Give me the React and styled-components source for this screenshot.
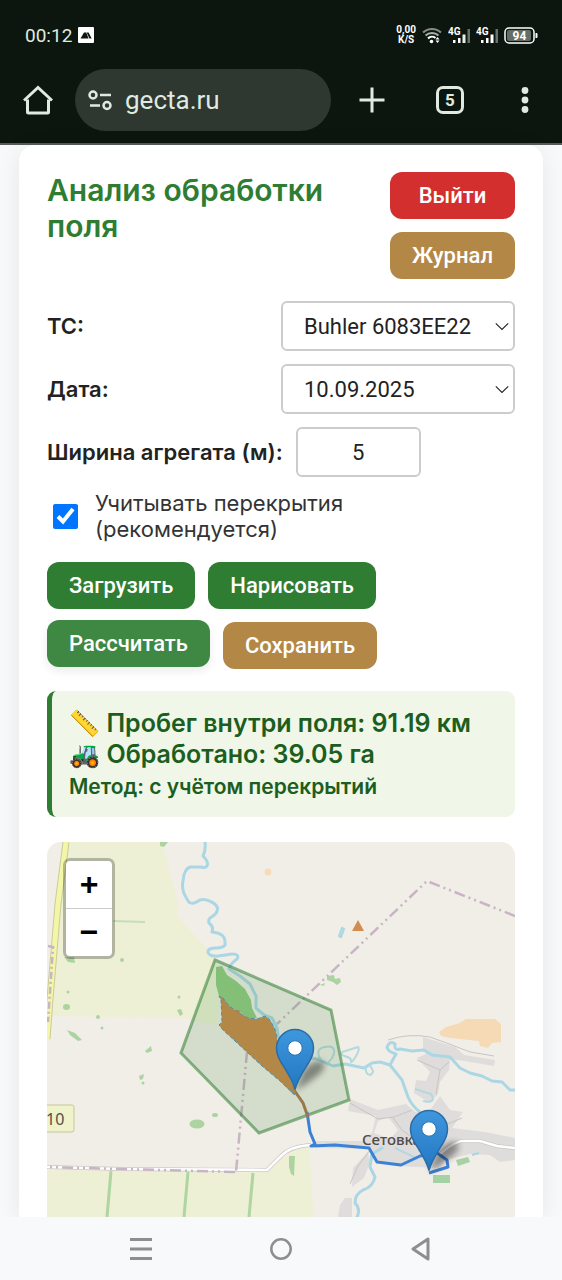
import styled, { createGlobalStyle } from 'styled-components'

const colors = {
  chrome: '#0c160e',
  pill: '#2e3730',
  chromeIcon: '#dfebe0',
  page: '#f7f9fb',
  green: '#2e7d32',
  greenHover: '#3e8843',
  darkGreen: '#1b5e20',
  red: '#d32f2f',
  brown: '#b38847',
  text: '#222222',
  border: '#cccccc',
}

const fonts = {
  inter: "Inter, 'Noto Color Emoji', sans-serif",
  roboto: 'Roboto, sans-serif',
}

const GlobalStyle = createGlobalStyle`
  * {
    box-sizing: border-box;
  }

  body {
    margin: 0;
    background: ${colors.page};
    color: ${colors.text};
    font-family: ${fonts.inter};
  }

  button {
    border: 0;
    padding: 0;
    background: none;
    cursor: pointer;
  }

  svg {
    display: block;
  }
`

const Screen = styled.div`
  display: flex;
  flex-direction: column;
  min-height: 100vh;
`

const Chrome = styled.header`
  background: ${colors.chrome};
  border-bottom: 2px solid #565c57;
  color: ${colors.chromeIcon};
  font-family: ${fonts.roboto};
`

const StatusBar = styled.div`
  display: flex;
  align-items: center;
  justify-content: space-between;
  height: 69px;
  padding: 1px 24px 0 25px;
`

const StatusGroup = styled.div`
  display: flex;
  align-items: center;
  gap: 6px;
`

const Clock = styled.span`
  font-size: 19px;
`

const Speed = styled.span`
  color: #fff;
  font-size: 10px;
  font-weight: 700;
  line-height: 10px;
  text-align: center;
`

const AddressBar = styled.div`
  display: grid;
  grid-template-columns: 75px 1fr 81px 76px 74px;
  align-items: center;
  height: 74px;
  padding-bottom: 12px;
`

const ChromeButton = styled.button`
  display: flex;
  align-items: center;
  justify-content: center;
  height: 62px;
  color: inherit;
`

const Pill = styled.div`
  display: flex;
  align-items: center;
  gap: 12px;
  height: 62px;
  padding-left: 13px;
  border-radius: 31px;
  background: ${colors.pill};
`

const Address = styled.span`
  font-size: 26px;
`

const TabCount = styled.span`
  display: flex;
  align-items: center;
  justify-content: center;
  width: 28px;
  height: 28px;
  border: 3px solid currentColor;
  border-radius: 7px;
  font-family: ${fonts.roboto};
  font-size: 17px;
  font-weight: 700;
`

const Card = styled.main`
  flex: 1;
  margin: 0 19px;
  padding: 27px 28px 0;
  border-radius: 16px 16px 0 0;
  background: #fff;
  box-shadow: 0 4px 24px rgba(0, 0, 0, 0.08);
`

const CardHeader = styled.div`
  display: flex;
  align-items: flex-start;
  justify-content: space-between;
  gap: 24px;
  margin-bottom: 22px;
`

const Title = styled.h1`
  margin: 0;
  color: ${colors.green};
  font-size: 30px;
  font-weight: 600;
  line-height: 36px;
`

const HeaderButtons = styled.div`
  display: flex;
  flex-direction: column;
  flex: none;
  gap: 13px;
`

const Button = styled.button`
  height: 47px;
  padding: 0 22px;
  border-radius: 12px;
  background: ${({ $color }) => $color};
  color: #fff;
  font-family: ${fonts.roboto};
  font-size: 22px;
  font-weight: 500;
`

const RaisedButton = styled(Button)`
  transform: translateY(-2px);
  box-shadow: 0 4px 10px rgba(0, 0, 0, 0.08);
`

const Form = styled.form`
  display: flex;
  flex-direction: column;
  gap: 13px;
`

const Field = styled.div`
  display: flex;
  align-items: center;
  justify-content: ${({ $inline }) => ($inline ? 'flex-start' : 'space-between')};
  gap: 13px;
`

const Label = styled.label`
  font-size: 22px;
  font-weight: 600;
`

const SelectWrapper = styled.div`
  display: grid;
  align-items: center;
  width: 50%;

  > * {
    grid-area: 1 / 1;
  }

  svg {
    justify-self: end;
    margin-right: 6px;
    pointer-events: none;
  }
`

const Select = styled.select`
  appearance: none;
  width: 100%;
  height: 50px;
  padding: 0 21px;
  border: 2px solid ${colors.border};
  border-radius: 6px;
  background: #fff;
  color: ${colors.text};
  font-family: ${fonts.roboto};
  font-size: 22px;
`

const WidthInput = styled.input`
  width: 125px;
  height: 50px;
  border: 2px solid ${colors.border};
  border-radius: 6px;
  color: ${colors.text};
  font-family: ${fonts.roboto};
  font-size: 22px;
  text-align: center;
`

const CheckRow = styled.label`
  display: flex;
  align-items: center;
  gap: 17px;
  max-width: 320px;
  color: #333;
  font-size: 22px;
  line-height: 26px;
`

const Checkbox = styled.input`
  flex: none;
  width: 25px;
  height: 25px;
  margin: 0 0 0 6px;
`

const Actions = styled.div`
  display: flex;
  flex-wrap: wrap;
  gap: 13px;
  max-width: 340px;
  margin-top: 7px;
`

const Result = styled.section`
  margin: 22px 0 25px;
  padding: 17px 17px 13px;
  border-left: 5px solid ${colors.green};
  border-radius: 9px;
  background: #f0f7e9;
  color: ${colors.darkGreen};
  font-weight: 600;
`

const ResultLine = styled.p`
  margin: 0;
  font-size: 25px;
  line-height: 31px;
`

const ResultNote = styled.p`
  margin: 0;
  font-size: 21px;
  line-height: 34px;
`

const MapFrame = styled.section`
  position: relative;
  overflow: hidden;
  border-radius: 14px 14px 0 0;
`

const ZoomControl = styled.div`
  position: absolute;
  top: 16px;
  left: 16px;
  display: flex;
  flex-direction: column;
  border: 3px solid rgba(0, 0, 0, 0.25);
  border-radius: 7px;
  background: #fff;
  background-clip: padding-box;
`

const ZoomButton = styled.button`
  width: 46px;
  height: 47px;
  color: #000;
  font: bold 32px/47px 'Liberation Sans', sans-serif;

  & + & {
    height: 48px;
    border-top: 1px solid ${colors.border};
  }
`

const NavBar = styled.nav`
  position: relative;
  display: grid;
  grid-template-columns: repeat(3, 140px);
  justify-content: center;
  height: 63px;
  background: ${colors.page};
  color: #8d8e90;
`

const NavButton = styled.button`
  display: flex;
  align-items: center;
  justify-content: center;
  color: inherit;
`

const PhotoIcon = () => (
  <svg width="16" height="16" viewBox="0 0 16 16">
    <rect width="16" height="16" rx="1" fill="#fff" />
    <path d="M2.5 11.500 6 5.500h2.200l2.400 6z" fill={colors.chrome} />
    <path d="M8.600 5.500h2l3 6h-2.200z" fill={colors.chrome} />
  </svg>
)

const WifiIcon = () => (
  <svg width="20" height="17" viewBox="0 0 20 17" fill="none" strokeWidth="2">
    <path d="M1 5.500a13 13 0 0 1 18 0" stroke="#858c86" />
    <path d="M3.500 8.500a9.500 9.500 0 0 1 13 0" stroke="#aab0ab" />
    <path d="M6 11.500a5.500 5.500 0 0 1 7.500-.5" stroke="#fff" />
    <circle cx="9.500" cy="14.500" r="1.800" fill="#fff" />
    <path d="m13.500 12.500 2-2.500 2 2.500zM13.500 13.500l2 2.500 2-2.500z" fill="#fff" />
  </svg>
)

const SignalIcon = ({ full }) => (
  <svg width="22" height="18" viewBox="0 0 22 18">
    <text x="0" y="9" fill="#fff" fontFamily="Roboto, sans-serif" fontSize="10" fontWeight="700">4G</text>
    <path d="M5 14h2.500v3H5zM10 12h2.500v5H10z" fill="#fff" />
    <path d="M14.500 8.500h3V17h-3z" fill={full ? '#fff' : '#e9eeea'} />
    <path d="M19.500 3H22v14h-2.500z" fill="#6a716b" />
  </svg>
)

const BatteryIcon = () => (
  <svg width="34" height="17" viewBox="0 0 34 17">
    <rect x="1" y="1" width="29" height="15" rx="4" fill="none" stroke="#fff" strokeWidth="1.500" />
    <rect x="3" y="3" width="24" height="11" rx="2" fill="#666d67" />
    <path d="M31.500 6h1a1 1 0 0 1 1 1v3a1 1 0 0 1-1 1h-1z" fill="#fff" />
    <text x="15.500" y="13" fill="#fff" fontFamily="Roboto, sans-serif" fontSize="12" fontWeight="700" textAnchor="middle">94</text>
  </svg>
)

const HomeIcon = () => (
  <svg width="30" height="30" viewBox="0 0 30 30" fill="none" stroke="currentColor" strokeWidth="3" strokeLinejoin="round">
    <path d="M1 15.500 15 2.500l14 13" strokeLinejoin="miter" />
    <path d="M4.500 14.500v12.500a1 1 0 0 0 1 1h19a1 1 0 0 0 1-1V14.500" />
  </svg>
)

const TuneIcon = () => (
  <svg width="25" height="21" viewBox="0 0 25 21" fill="none" stroke="currentColor" strokeWidth="2.500">
    <circle cx="5" cy="5" r="3.500" />
    <path d="M12 5h11M2 15.500h10" />
    <circle cx="19" cy="15.500" r="3.500" />
  </svg>
)

const PlusIcon = () => (
  <svg width="26" height="26" viewBox="0 0 26 26" stroke="currentColor" strokeWidth="3">
    <path d="M13 .5v25M.5 13h25" />
  </svg>
)

const DotsIcon = () => (
  <svg width="8" height="26" viewBox="0 0 8 26" fill="currentColor">
    <circle cx="4" cy="3.500" r="3.400" />
    <circle cx="4" cy="13" r="3.400" />
    <circle cx="4" cy="22.500" r="3.400" />
  </svg>
)

const Chevron = () => (
  <svg width="14" height="9" viewBox="0 0 14 9" fill="none" stroke="#222" strokeWidth="1.100">
    <path d="m.8 1.300 6.200 6.200 6.200-6.200" />
  </svg>
)

const Marker = ({ x, y }) => (
  <g transform={`translate(${x} ${y})`}>
    <path d="M0 0 8-20q8-11 18-10c6 2 4 9-4 15Q12-7 0 0z" fill="#000" opacity="0.4" filter="url(#soft)" />
    <path
      d="M0-1.500C-2-10-8-19-13.500-28-17-33.500-18.500-38-18.500-43a18.500 18.500 0 0 1 37 0c0 5-1.500 9.500-5 15C8-19 2-10 0-1.500z"
      fill="url(#pin)"
      stroke="#2a6ca6"
      strokeWidth="1.500"
    />
    <circle cy="-43" r="7.200" fill="#fff" stroke="#2d72ad" strokeWidth="1" />
  </g>
)

const FieldMap = () => (
  <svg width="100%" viewBox="47 842 468 375" role="img" aria-label="Карта поля">
    <defs>
      <linearGradient id="pin" x1="0" y1="0" x2="0" y2="1">
        <stop offset="0" stopColor="#3f97dd" />
        <stop offset="1" stopColor="#2277c2" />
      </linearGradient>
      <filter id="soft" x="-40%" y="-40%" width="180%" height="180%">
        <feGaussianBlur stdDeviation="3" />
      </filter>
    </defs>
    <rect x="47" y="842" width="468" height="375" fill="#f1eee8" />

    {/* farmland */}
    <g fill="#edf0d5">
      <path d="M65 842H161L166 857 178 902 177 916 206 947 215 960 222 990 216 1025 184 1018 47 1016z" />
      <path d="M47 1170H271L281 1158 301 1147 309 1149 314 1217H47z" />
    </g>
    <path d="M111 1171 107 1217M188 1172 184 1217M253 1173 249 1217" fill="none" stroke="#aed5a2" strokeWidth="3" />
    <path d="M113 921 145 922" stroke="#c5dcc0" strokeWidth="2" />

    {/* woods */}
    <g fill="#acd3a0">
      <path d="M160 842h8l-4 5-4-1zM64 957h10l1 6-7-1zM67 1030l8 3 7 7-4 1-8-6zM145 1051l6-5 1 5-5 2zM139 1076l5-2-1 5-3 1zM177 1010l4-1 2 5-3 2zM289 1156h6l-1 20-3-2-2-7z" />
      <ellipse cx="66.500" cy="1007" rx="3.500" ry="3" />
      <ellipse cx="197" cy="1124" rx="7.500" ry="4.500" />
      <ellipse cx="215" cy="1115" rx="3" ry="2" />
      <circle cx="122" cy="960" r="2" />
      <circle cx="68" cy="992" r="1.500" />
      <circle cx="98" cy="1017" r="2" />
      <circle cx="102" cy="1028" r="1.500" />
      <circle cx="179" cy="997" r="1.500" />
      <circle cx="143" cy="1083" r="1.500" />
      <path d="m327 976 7-1 1 4 5-1 1 4-4 3-4-3-6-2zM320 985l5-2-1 3z" />
    </g>
    <path d="M216 967 222 966 227 975 236 981 245 989 251 1000 252 1008 257 1018 248 1019 240 1012 229 1007 223 999 219 996 216 985z" fill="#93cb85" />

    {/* industrial area, settlement */}
    <path d="M439 1032 446 1027 460 1023 466 1019H495L501 1024V1042L492 1043 488 1048 480 1046 479 1041 450 1038 441 1036z" fill="#f5dab5" />
    <circle cx="268" cy="872" r="3.500" fill="#f8dcb6" />
    <g fill="#dfdcdc">
      <path d="M423 1037 455 1047 464 1055 495 1060 494 1066 465 1061 450 1059 449 1070 440 1082 438 1094 430 1103 414 1093 416 1080 426 1081 430 1072 417 1058 426 1054 423 1050z" />
      <path
        fillRule="evenodd"
        d="M350 1099 378 1110 406 1104 415 1112 430 1110 440 1096 450 1110 463 1112 452 1128 485 1132 515 1138V1160L500 1162 490 1155 470 1154 445 1160 440 1168 395 1166 375 1160 370 1149 315 1148V1141L362 1141 372 1133 376 1116 348 1111zM378 1121 388 1117 398 1130 390 1139 374 1133z"
      />
      <path d="M353 1168 368 1152 370 1162 364 1178 352 1187zM340 1205 345 1198H352V1217H338z" />
    </g>
    <g fill="none" stroke="#c8c4c4" strokeWidth="1">
      <path d="M388 1040Q408 1033 430 1037 450 1044 470 1052L494 1056M350 1103 378 1119 394 1117 412 1110M393 1118 402 1130 418 1142M350 1184 358 1166 370 1150M417 1060 440 1070 449 1062M440 1070 436 1094M445 1125 462 1118" />
    </g>

    {/* river */}
    <g fill="none" stroke="#abd6e4" strokeWidth="3" strokeLinejoin="round" strokeLinecap="round">
      <path d="M205 842Q206 850 203 856C211 864 207 869 201 867L190 867Q184 869 183 881 181 890 187 899C190 906 195 903 200 900 206 898 220 904 217 911 216 917 207 916 209 923Q214 927 212 932C220 933 226 935 225 945 222 951 208 945 208 952 209 958 220 956 226 955 234 953 240 954 237 959Q230 964 229 969L240 976 250 984 256 996 256 1008 264 1015 272 1018 277 1028 279 1040Q290 1055 317 1059L333 1066 345 1064 364 1068 372 1063 380 1062 390 1065 396 1054Q388 1052 387 1047 390 1040 395 1044 394 1051 400 1049L412 1051 424 1050 432 1055 450 1057 460 1068 470 1073 482 1076 492 1081 502 1082 510 1090 515 1090" />
      <path d="M390 1065 402 1080 408 1097Q412 1106 420 1112" />
      <path d="M382 1148 372 1154 370 1167 375 1177Q373 1187 363 1190 355 1194 355 1203 361 1209 357 1217" />
    </g>
    <g fill="none" stroke="#b3d9df" strokeWidth="2">
      <path d="M321 1060Q314 1049 325 1047C335 1045 336 1051 332 1058L328 1063M351 1063C353 1054 338 1058 342 1052L358 1047Q361 1050 352 1062M366 1068Q365 1074 370 1075 376 1072 370 1066M415 1089 431 1094Q437 1104 423 1101M395 1148 418 1159" />
      <path d="m339 936 3-8 2 1-3 8zM472 1155l7-2" stroke="#a8d7e2" />
    </g>

    {/* roads */}
    <g fill="none">
      <path d="M66 842 58 904 50 999 47 1039" stroke="#c9cc9c" strokeWidth="7" />
      <path d="M66 842 58 904 50 999 47 1039" stroke="#f3f6a6" strokeWidth="5" />
      <path d="M47 1167 122 1169 267 1170 280 1157Q290 1146 311 1145M438 1156Q455 1141 463 1141H480L497 1146 515 1148" stroke="#ccc6c8" strokeWidth="4" />
      <path d="M47 1167 122 1169 267 1170 280 1157Q290 1146 311 1145M438 1156Q455 1141 463 1141H480L497 1146 515 1148" stroke="#fff" strokeWidth="2.600" />
    </g>

    {/* district border */}
    <g fill="none" stroke="#c8b4c4" strokeWidth="2.500">
      <path d="M515 916 427 881 277 1024M247 1052 236 1172" strokeDasharray="11 4 2 4 2 4" />
      <path d="M235 1172 122 1169 47 1167" strokeDasharray="11 4 2 4 2 4" />
      <path d="M48 946 53 947 50 992 48 1022" strokeDasharray="7 3 2 3" />
    </g>
    <path d="m358 920 6 11h-12z" fill="#d28c4e" />
    <path d="m456 1160 12-3 2 5-12 4zM433 1175h17v8h-17z" fill="#a4d2a5" />

    <rect x="39" y="1105" width="35" height="27" rx="2" fill="#f0f2c9" stroke="#c6c69c" />
    <text x="46" y="1125" fill="#51504a" fontFamily="'Noto Sans', sans-serif" fontSize="16">10</text>
    <text x="362" y="1145" fill="#4f4c4b" fontFamily="'Noto Sans', sans-serif" fontSize="15" fontWeight="500">Сетовка</text>

    {/* drawn field, treated area and track */}
    <path d="M215 960 331 1010 349 1100 259 1133 181 1053z" fill={colors.green} fillOpacity="0.15" stroke={colors.green} strokeOpacity="0.55" strokeWidth="3" />
    <path d="M307 1112 310 1132 315 1144 311 1146 335 1145 369 1148 377 1162 401 1165 420 1156 437 1153 447 1160 448 1167 429 1173" fill="none" stroke="#3b82d6" strokeWidth="3" strokeLinejoin="round" />
    <path d="M294 1090 303 1103 308 1117" fill="none" stroke="#97794a" strokeWidth="3" />
    <path
      d="M219 996 223 998 229 1006 235 1010 239 1010 241 1014 248 1018 257 1019 265 1016 270 1020 275 1029 277 1037V1050L296 1092 294 1095 280 1081 262 1066 248 1053 235 1041 223 1030 219 1025 222 1022 221 1000z"
      fill={colors.brown}
    />
    <path
      d="M295 1095 280 1081 262 1066 248 1053 235 1041 223 1030 219 1025 222 1022 221 1000 219 996 223 998 229 1006 235 1010 241 1014 248 1018 257 1019 265 1016 270 1020 275 1029 277 1037"
      fill="none"
      stroke="#4f8fae"
      strokeDasharray="4 2"
    />

    <Marker x={295} y={1091} />
    <Marker x={429} y={1172} />
  </svg>
)

const App = () => {
  return (
    <Screen>
      <GlobalStyle />
      <Chrome>
        <StatusBar>
          <StatusGroup>
            <Clock>00:12</Clock>
            <PhotoIcon />
          </StatusGroup>
          <StatusGroup>
            <Speed>
              0,00
              <br />
              K/S
            </Speed>
            <WifiIcon />
            <SignalIcon />
            <SignalIcon full />
            <BatteryIcon />
          </StatusGroup>
        </StatusBar>
        <AddressBar>
          <ChromeButton aria-label="Главная">
            <HomeIcon />
          </ChromeButton>
          <Pill>
            <TuneIcon />
            <Address>gecta.ru</Address>
          </Pill>
          <ChromeButton aria-label="Новая вкладка">
            <PlusIcon />
          </ChromeButton>
          <ChromeButton aria-label="Вкладки">
            <TabCount>5</TabCount>
          </ChromeButton>
          <ChromeButton aria-label="Меню">
            <DotsIcon />
          </ChromeButton>
        </AddressBar>
      </Chrome>

      <Card>
        <CardHeader>
          <Title>Анализ обработки поля</Title>
          <HeaderButtons>
            <Button $color={colors.red}>Выйти</Button>
            <Button $color={colors.brown}>Журнал</Button>
          </HeaderButtons>
        </CardHeader>

        <Form onSubmit={e => e.preventDefault()}>
          <Field>
            <Label htmlFor="vehicle">ТС:</Label>
            <SelectWrapper>
              <Select id="vehicle">
                <option>Buhler 6083EE22</option>
              </Select>
              <Chevron />
            </SelectWrapper>
          </Field>
          <Field>
            <Label htmlFor="date">Дата:</Label>
            <SelectWrapper>
              <Select id="date">
                <option>10.09.2025</option>
              </Select>
              <Chevron />
            </SelectWrapper>
          </Field>
          <Field $inline>
            <Label htmlFor="width">Ширина агрегата (м):</Label>
            <WidthInput id="width" inputMode="numeric" defaultValue="5" />
          </Field>
          <CheckRow>
            <Checkbox type="checkbox" defaultChecked />
            <span>Учитывать перекрытия (рекомендуется)</span>
          </CheckRow>
          <Actions>
            <Button type="button" $color={colors.green}>Загрузить</Button>
            <Button type="button" $color={colors.green}>Нарисовать</Button>
            <RaisedButton type="button" $color={colors.greenHover}>Рассчитать</RaisedButton>
            <Button type="button" $color={colors.brown}>Сохранить</Button>
          </Actions>
        </Form>

        <Result>
          <ResultLine>📏 Пробег внутри поля: 91.19 км</ResultLine>
          <ResultLine>🚜 Обработано: 39.05 га</ResultLine>
          <ResultNote>Метод: с учётом перекрытий</ResultNote>
        </Result>

        <MapFrame>
          <FieldMap />
          <ZoomControl>
            <ZoomButton aria-label="Приблизить">+</ZoomButton>
            <ZoomButton aria-label="Отдалить">−</ZoomButton>
          </ZoomControl>
        </MapFrame>
      </Card>

      <NavBar>
        <NavButton aria-label="Недавние">
          <svg width="22" height="22" viewBox="0 0 22 22" stroke="currentColor" strokeWidth="3">
            <path d="M0 1.500h22M0 11h22M0 20.500h22" />
          </svg>
        </NavButton>
        <NavButton aria-label="Домой">
          <svg width="22" height="22" viewBox="0 0 22 22" fill="none" stroke="currentColor" strokeWidth="2.500">
            <circle cx="11" cy="11" r="9.700" />
          </svg>
        </NavButton>
        <NavButton aria-label="Назад">
          <svg width="20" height="24" viewBox="0 0 20 24" fill="none" stroke="currentColor" strokeWidth="3" strokeLinejoin="round">
            <path d="M17 2v20L2 12z" />
          </svg>
        </NavButton>
      </NavBar>
    </Screen>
  )
}

export default App
